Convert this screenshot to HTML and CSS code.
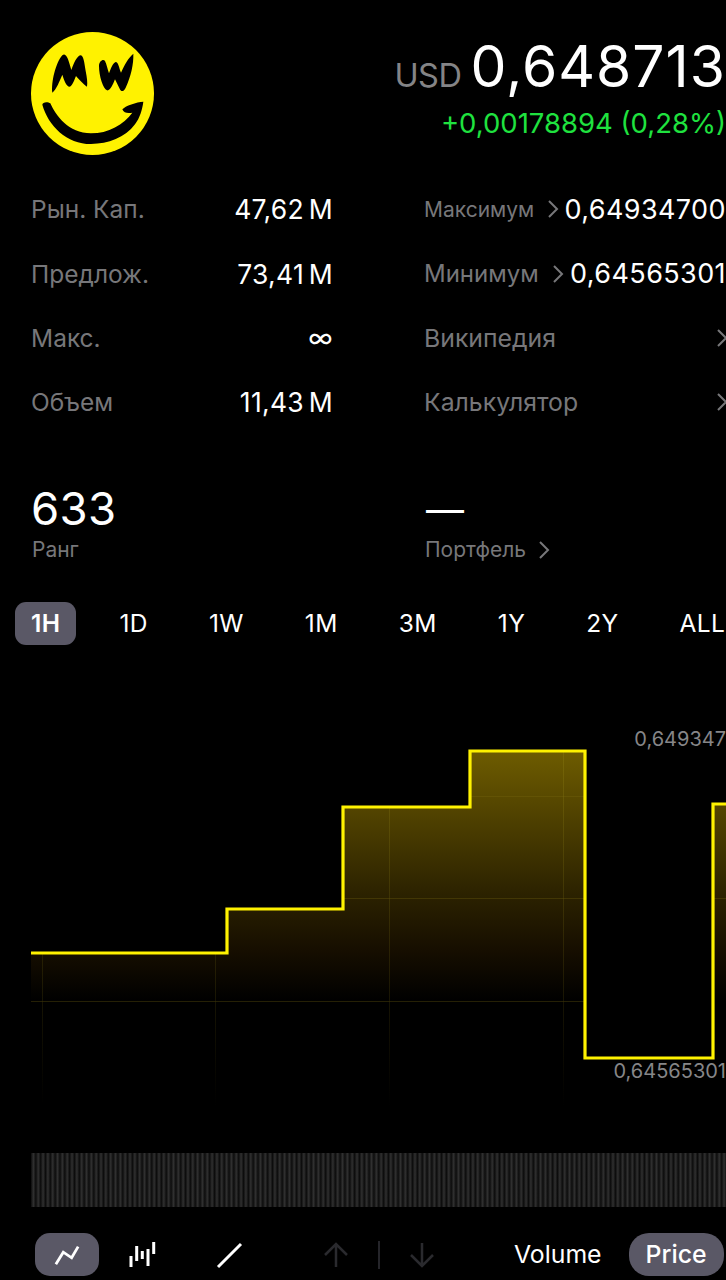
FILE: index.html
```html
<!DOCTYPE html>
<html lang="ru">
<head>
<meta charset="utf-8">
<title>Grin</title>
<link rel="stylesheet" href="styles.css">
</head>
<body>
<div class="page">
  <header class="top">
    <svg class="logo" viewBox="18 18 369 369">
      <circle cx="202.500" cy="202.500" r="184.500" fill="#fff200"/>
      <path d="M82 200C78 170 92 110 112 88C120 80 128 92 133 112L139 132C146 112 156 90 166 88C176 88 178 110 182 135C186 155 188 170 186 182C176 176 160 158 153 150C148 162 142 180 134 182C124 182 116 160 112 146C104 165 94 190 82 200Z" fill="#000"/>
      <path d="M222 120C222 105 235 98 240 105C245 115 248 130 252 142C258 128 262 112 272 108C280 108 282 125 288 140C298 118 310 95 325 83C326 115 318 150 302 185C296 198 288 198 284 188L270 160C264 175 256 195 246 193C234 188 222 150 222 120Z" fill="#000"/>
      <path d="M52 236C52 228 68 226 76 232C92 268 130 322 198 322C250 322 296 296 322 260C310 262 296 262 292 250C300 240 335 228 355 227C352 250 345 275 330 295C300 335 250 354 198 354C125 354 70 300 52 236Z" fill="#000"/>
    </svg>
    <div class="quote">
      <div class="price-line"><span class="currency">USD</span><span class="price">0,648713</span></div>
      <div class="change">+0,00178894 (0,28%)</div>
    </div>
  </header>

  <section class="stats">
    <div class="stat"><span class="stat-label">Рын. Кап.</span><span class="stat-value">47,62 M</span></div>
    <div class="link"><span class="link-label small">Максимум</span><svg class="chev" viewBox="0 0 12 20"><path d="M2 2l8 8-8 8"/></svg><span class="link-value">0,64934700</span></div>
    <div class="stat"><span class="stat-label">Предлож.</span><span class="stat-value">73,41 M</span></div>
    <div class="link"><span class="link-label medium">Минимум</span><svg class="chev" viewBox="0 0 12 20"><path d="M2 2l8 8-8 8"/></svg><span class="link-value">0,64565301</span></div>
    <div class="stat"><span class="stat-label">Макс.</span><span class="stat-value inf">∞</span></div>
    <div class="link"><span class="link-label grow">Википедия</span><svg class="chev chev-end" viewBox="0 0 12 20"><path d="M2 2l8 8-8 8"/></svg></div>
    <div class="stat"><span class="stat-label">Объем</span><span class="stat-value">11,43 M</span></div>
    <div class="link"><span class="link-label grow">Калькулятор</span><svg class="chev chev-end" viewBox="0 0 12 20"><path d="M2 2l8 8-8 8"/></svg></div>
  </section>

  <section class="summary">
    <div class="sum-col">
      <div class="sum-value">633</div>
      <div class="sum-label">Ранг</div>
    </div>
    <div class="sum-col">
      <div class="sum-value dash">—</div>
      <div class="sum-label sum-link">Портфель<svg class="chev chev-sm" viewBox="0 0 12 20"><path d="M2 2l8 8-8 8"/></svg></div>
    </div>
  </section>

  <nav class="ranges">
    <span class="range active">1H</span>
    <span class="range">1D</span>
    <span class="range">1W</span>
    <span class="range">1M</span>
    <span class="range">3M</span>
    <span class="range">1Y</span>
    <span class="range">2Y</span>
    <span class="range">ALL</span>
  </nav>

  <section class="chart">
    <svg class="chart-svg" viewBox="0 0 726 470" width="726" height="470">
      <defs>
        <linearGradient id="fill" gradientUnits="userSpaceOnUse" x1="0" y1="91" x2="0" y2="341">
          <stop offset="0" stop-color="#6e5c00"/>
          <stop offset=".55" stop-color="#2e2400"/>
          <stop offset=".8" stop-color="#160e00"/>
          <stop offset="1" stop-color="#000"/>
        </linearGradient>
        <linearGradient id="vgrid" gradientUnits="userSpaceOnUse" x1="0" y1="91" x2="0" y2="445">
          <stop offset="0" stop-color="#8a7a10"/>
          <stop offset=".7" stop-color="#3a3208"/>
          <stop offset="1" stop-color="#000"/>
        </linearGradient>
        <clipPath id="area"><path d="M31 293H227V249H343V147H470V91H585V398H713V144H726V450H31Z"/></clipPath>
      </defs>
      <path d="M31 293H227V249H343V147H470V91H585V398H713V144H726V450H31Z" fill="url(#fill)"/>
      <g clip-path="url(#area)" class="grid">
        <path d="M31 136.500H726M31 238.500H726M31 341.500H585" stroke="#7a6a10" stroke-opacity=".3"/>
        <path d="M42.500 91V445M215.500 91V445M389.500 91V445M563.500 91V445" stroke="url(#vgrid)" stroke-opacity=".4"/>
      </g>
      <path d="M31 293H227V249H343V147H470V91H585V398H713V144H726" fill="none" stroke="#fff200" stroke-width="3.200"/>
    </svg>
    <span class="tag tag-high">0,649347</span>
    <span class="tag tag-low">0,64565301</span>
  </section>

  <div class="volume"></div>

  <footer class="toolbar">
    <span class="tool active">
      <svg viewBox="0 0 28 24" class="tool-icon"><path d="M2 22L10 9L19 15L26 3"/></svg>
    </span>
    <span class="tool tool-bars">
      <svg viewBox="0 0 27 26" class="tool-icon bars"><path d="M2 14V25M7.700 4V19M13.300 9V17M19 7V24M24.700 0V12"/></svg>
    </span>
    <span class="tool tool-line">
      <svg viewBox="0 0 28 28" class="tool-icon"><path d="M3 26L26 3"/></svg>
    </span>
    <span class="arrows">
      <svg viewBox="0 0 26 26" class="arrow"><path d="M13 25V2M2 13L13 2L24 13"/></svg>
      <span class="sep"></span>
      <svg viewBox="0 0 26 26" class="arrow"><path d="M13 1V24M2 13L13 24L24 13"/></svg>
    </span>
    <span class="pill">Volume</span>
    <span class="pill active">Price</span>
  </footer>
</div>
</body>
</html>
```
FILE: styles.css
```css
* { box-sizing: border-box; }
html, body { margin: 0; background: #000; }
body { font-family: Inter, "Liberation Sans", sans-serif; color: #fff; }
.page { width: 726px; height: 1280px; overflow: hidden; position: relative; }

.top { display: flex; justify-content: space-between; padding: 32px 0 0 31px; height: 177px; }
.logo { width: 123px; height: 123px; flex: none; }
.quote { display: flex; flex-direction: column; align-items: flex-end; }
.price-line { display: flex; align-items: baseline; gap: 9px; margin-top: 3px; height: 63px; line-height: 63px; white-space: nowrap; }
.currency { font-size: 32.500px; color: #848486; letter-spacing: -.5px; }
.price { font-size: 57px; letter-spacing: 1px; }
.change { font-size: 27.500px; line-height: 32px; color: #1fe23f; margin-top: 9px; white-space: nowrap; }

.stats { display: grid; grid-template-columns: 302px 302px; column-gap: 91px; grid-auto-rows: 64.4px; padding-left: 31px; }
.stat, .link { display: flex; align-items: center; height: 64.400px; white-space: nowrap; }
.stat { justify-content: space-between; }
.stat-label, .link-label { font-size: 24.800px; color: #77777a; }
.stat-label { font-size: 24.500px; }
.link-label.small { font-size: 21px; }
.link-label.medium { font-size: 24px; }
.stat-value { font-size: 26.500px; letter-spacing: .3px; word-spacing: -3px; }
.stat-value.inf { font-size: 26px; }
.link-value { font-size: 27px; margin-left: auto; letter-spacing: .4px; }
.grow { flex: 1; }
.chev { width: 12px; height: 20px; flex: none; margin-left: 13px; fill: none; stroke: #77777a; stroke-width: 2; }
.chev-end { margin-right: -2px; }
.chev-sm { margin-left: 12px; vertical-align: -3px; }

.summary { display: grid; grid-template-columns: 395px 1fr; padding: 47px 0 0 31px; height: 167px; }
.sum-value { font-size: 45.500px; line-height: 54px; letter-spacing: .3px; }
.sum-value.dash { font-size: 38px; }
.sum-label { font-size: 21px; line-height: 28px; color: #77777a; padding-left: 1px; }
.sum-link { padding-left: 0; margin-left: -1px; }

.ranges { display: flex; align-items: center; gap: 31px; height: 43px; padding-left: 15px; }
.range { font-size: 24.500px; letter-spacing: .4px; padding: 0 15px; line-height: 43px; height: 43px; flex: none; }
.range.active { background: #5a5866; border-radius: 11px; font-weight: 600; margin-right: -3px; padding: 0 16px; }

.chart { position: relative; height: 462px; margin-top: 15px; }
.chart-svg { position: absolute; left: 0; top: 0; display: block; }
.grid { shape-rendering: crispEdges; }
.tag { position: absolute; right: 0; font-size: 20px; line-height: 22px; color: #868688; white-space: nowrap; }
.tag-high { top: 68px; }
.tag-low { top: 400px; }

.volume { height: 54px; margin: 31px 0 0 31px; background: repeating-linear-gradient(90deg, #0c0c0c 0, #303030 2.400px, #0c0c0c 4.830px); }

.toolbar { display: flex; align-items: center; height: 44px; margin-top: 26px; padding-left: 35px; }
.tool { display: flex; align-items: center; justify-content: center; width: 64px; height: 43px; border-radius: 15px; flex: none; }
.tool.active { background: #5a5866; }
.tool-icon { width: 26px; height: 24px; fill: none; stroke: #fff; stroke-width: 3; }
.tool-icon.bars { stroke-width: 3; width: 27px; height: 26px; }
.tool-bars { margin-left: 11px; }
.tool-line { margin-left: 23px; }
.tool-line .tool-icon { width: 28px; height: 28px; }
.arrows { display: flex; align-items: center; gap: 29px; margin-left: 62px; flex: none; }
.arrow { width: 26px; height: 26px; fill: none; stroke: #2a2a2e; stroke-width: 2.500; }
.sep { width: 2px; height: 28px; background: #25252a; }
.pill { font-size: 24.800px; line-height: 43px; height: 43px; border-radius: 20px; padding: 0 16px; flex: none; }
.arrows + .pill { margin-left: 63px; }
.pill.active { background: #5a5866; font-weight: 500; margin-left: 11px; padding: 0 17px; }
```
